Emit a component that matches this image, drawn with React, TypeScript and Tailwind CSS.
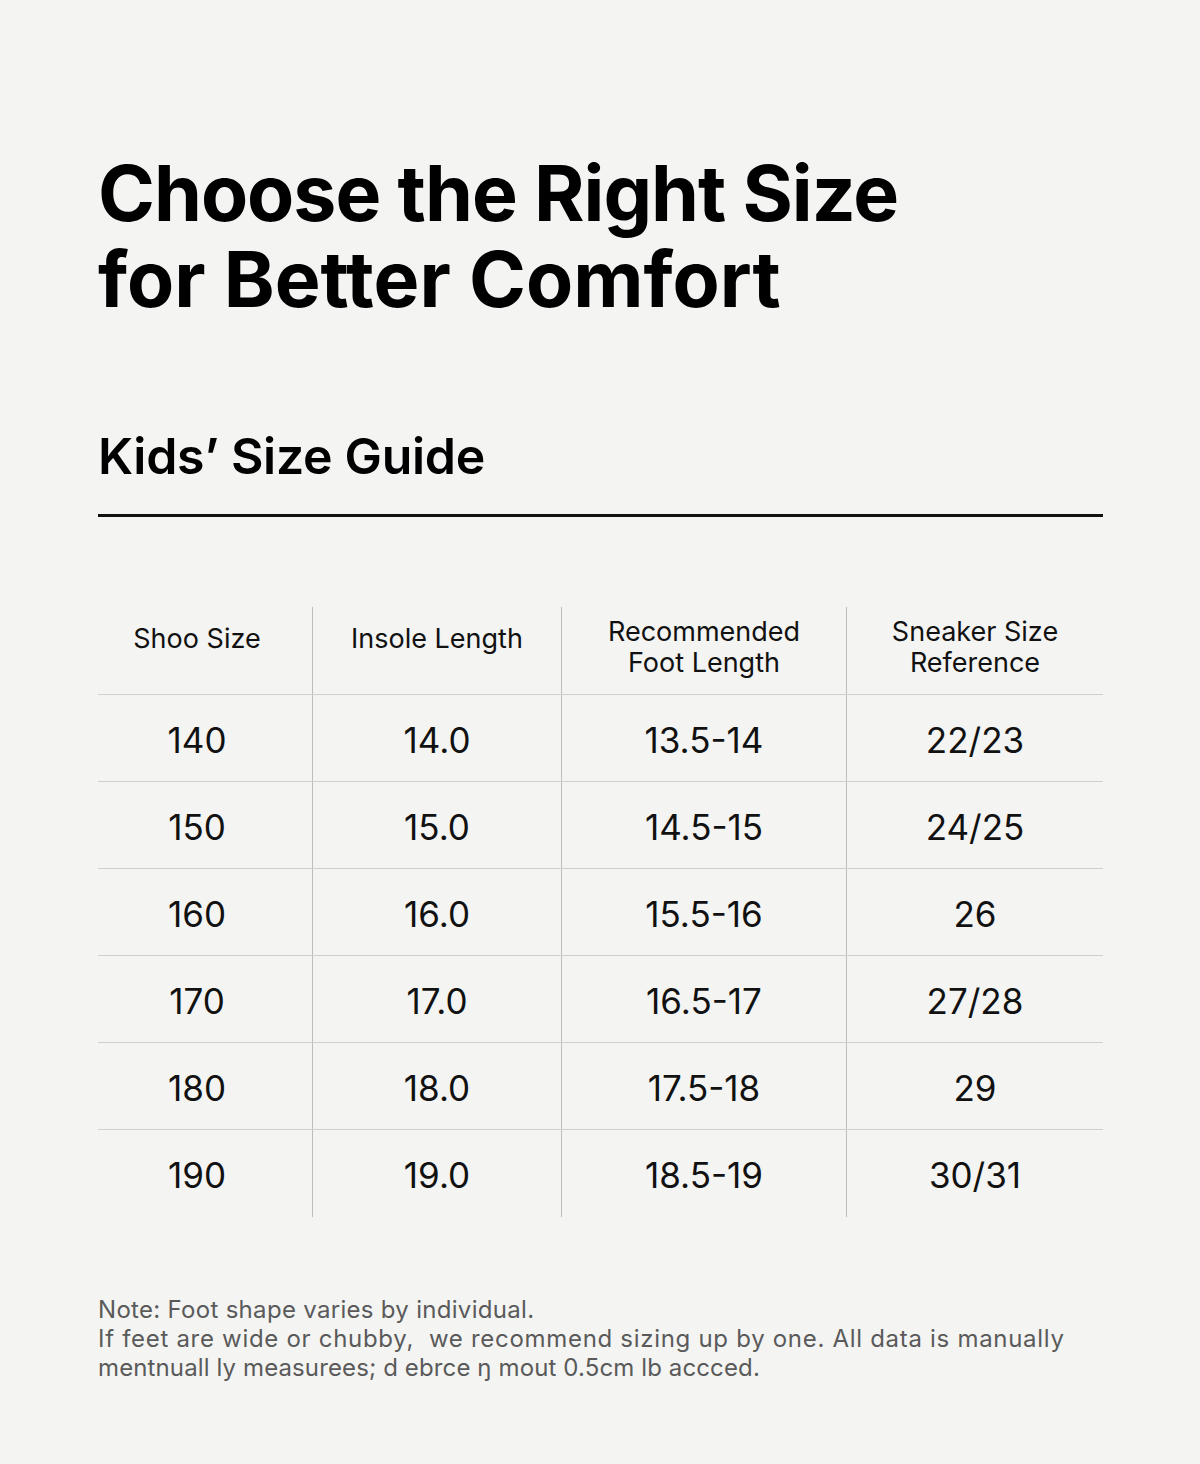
import React from "react";

const rows = [
  ["140", "14.0", "13.5-14", "22/23"],
  ["150", "15.0", "14.5-15", "24/25"],
  ["160", "16.0", "15.5-16", "26"],
  ["170", "17.0", "16.5-17", "27/28"],
  ["180", "18.0", "17.5-18", "29"],
  ["190", "19.0", "18.5-19", "30/31"],
];

const cols = ["w-[214px] pr-[16px]", "w-[249px]", "w-[285px]", "flex-1"];

export default function App() {
  return (
    <div className="w-[1200px] h-[1464px] bg-[#f4f4f3] text-black font-['Inter',sans-serif] px-[98px] pt-[150px]">
      <h1 className="text-[77px] leading-[86px] font-bold">
        <span className="block tracking-[-1px]">Choose the Right Size</span>
        <span className="block tracking-[0px]">for Better Comfort</span>
      </h1>
      <h2 className="mt-[106px] text-[50px] leading-[56px] font-semibold tracking-[-0.3px]">
        Kids’ Size Guide
      </h2>
      <div className="mt-[30px] h-[3px] bg-[#111] w-[1005px]" />
      <div className="mt-[90px] w-[1005px]">
        <div className="flex h-[88px] border-b border-[#cfcfcf]">
          {["Shoo Size", "Insole Length", "Recommended\nFoot Length", "Sneaker Size\nReference"].map((h, i) => (
            <div
              key={i}
              className={`${cols[i]} flex items-center justify-center text-center whitespace-pre-line text-[27px] leading-[31px] text-[#111] ${i < 2 ? "pb-[24px]" : "pb-[8px]"} ${i > 0 ? "border-l border-[#bdbdbd]" : ""}`}
            >
              {h}
            </div>
          ))}
        </div>
        {rows.map((r, ri) => (
          <div key={ri} className={`flex h-[87px] ${ri < rows.length - 1 ? "border-b border-[#cfcfcf]" : ""}`}>
            {r.map((c, i) => (
              <div
                key={i}
                className={`${cols[i]} flex items-center justify-center text-[35px] pt-[4px] text-[#111] ${i > 0 ? "border-l border-[#bdbdbd]" : ""}`}
              >
                {c}
              </div>
            ))}
          </div>
        ))}
      </div>
      <div className="mt-[78px] text-[24px] leading-[29px] text-[#5a5a5a]">
        <p className="tracking-[0.3px]">Note: Foot shape varies by individual.</p>
        <p className="tracking-[0.7px]">If feet are wide or chubby,&nbsp; we recommend sizing up by one. All data is manually</p>
        <p className="tracking-[0.12px]">mentnuall ly measurees; d ebrce ŋ mout 0.5cm lb accced.</p>
      </div>
    </div>
  );
}
